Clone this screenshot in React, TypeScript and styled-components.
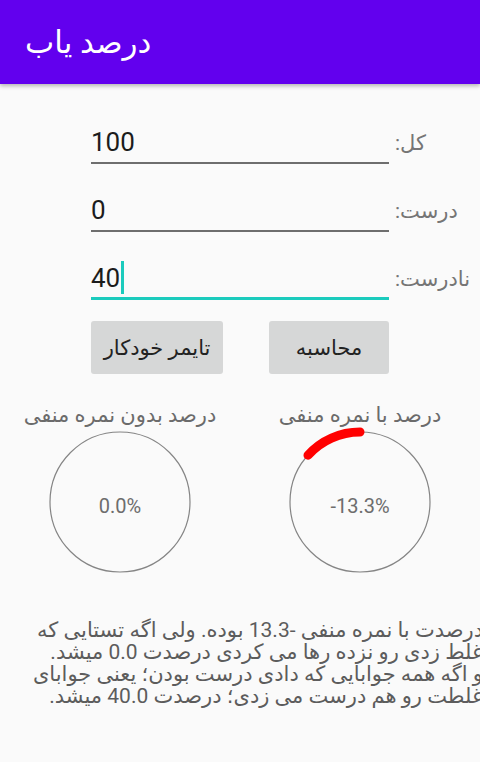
import React from "react";
import styled, { createGlobalStyle } from "styled-components";

const GlobalStyle = createGlobalStyle`
  html, body {
    margin: 0;
    padding: 0;
    background: #fafafa;
    overflow: hidden;
  }
  body {
    font-family: Roboto, "Noto Sans", "DejaVu Sans", sans-serif;
  }
`;

interface FieldInfo {
  label: string;
  value: string;
  focused?: boolean;
}

const fields: FieldInfo[] = [
  { label: "کل:", value: "100" },
  { label: "درست:", value: "0" },
  { label: "نادرست:", value: "40", focused: true },
];

const total = 100;
const correct = 0;
const wrong = 40;
const withNegative = ((correct * 3 - wrong) / (total * 3)) * 100;
const withoutNegative = (correct / total) * 100;
const ifAllCorrect = ((correct + wrong) / total) * 100;

const R = 70;
const C = 72;

const arcPath = (percent: number) => {
  const angle = (Math.abs(percent) / 100) * 2 * Math.PI;
  const dir = percent < 0 ? -1 : 1;
  const x = C + dir * R * Math.sin(angle);
  const y = C - R * Math.cos(angle);
  const large = angle > Math.PI ? 1 : 0;
  const sweep = percent < 0 ? 0 : 1;
  return `M ${C} ${C - R} A ${R} ${R} 0 ${large} ${sweep} ${x.toFixed(2)} ${y.toFixed(2)}`;
};

const Gauge: React.FC<{ title: string; percent: number }> = ({ title, percent }) => (
  <GaugeBox>
    <GaugeTitle>{title}</GaugeTitle>
    <Dial>
      <svg width={C * 2} height={C * 2} viewBox={`0 0 ${C * 2} ${C * 2}`} style={{ overflow: "visible" }}>
        <circle cx={C} cy={C} r={R} fill="none" stroke="#858585" strokeWidth={1.2} />
        {percent !== 0 && (
          <path d={arcPath(percent)} fill="none" stroke="#ff0000" strokeWidth={9} strokeLinecap="round" />
        )}
      </svg>
      <DialValue>{percent.toFixed(1)}%</DialValue>
    </Dial>
  </GaugeBox>
);

export default function App() {
  return (
    <Screen>
      <GlobalStyle />
      <AppBar>
        <Title>درصد یاب</Title>
      </AppBar>
      <Form>
        {fields.map((f) => (
          <Row key={f.label}>
            <Field $focused={f.focused}>
              {f.value}
              {f.focused && <Caret />}
            </Field>
            <Label>{f.label}</Label>
          </Row>
        ))}
      </Form>
      <Buttons>
        <Button>تایمر خودکار</Button>
        <Button $wide={false}>محاسبه</Button>
      </Buttons>
      <Gauges>
        <Gauge title="درصد بدون نمره منفی" percent={withoutNegative} />
        <Gauge title="درصد با نمره منفی" percent={withNegative} />
      </Gauges>
      <Summary>
        درصدت با نمره منفی {withNegative.toFixed(1)} بوده. ولی اگه تستایی که غلط زدی رو نزده رها می کردی درصدت{" "}
        {withoutNegative.toFixed(1)} میشد.
        <br />
        و اگه همه جوابایی که دادی درست بودن؛ یعنی جوابای غلطت رو هم درست می زدی؛ درصدت {ifAllCorrect.toFixed(1)} میشد.
      </Summary>
    </Screen>
  );
}

const Screen = styled.div`
  width: 480px;
  height: 762px;
  background: #fafafa;
  display: flex;
  flex-direction: column;
`;
const AppBar = styled.header`
  height: 84px;
  flex-shrink: 0;
  background: #6200ee;
  display: flex;
  align-items: center;
  padding-left: 25px;
  box-shadow: 0 2px 4px rgba(0, 0, 0, 0.28);
  position: relative;
  z-index: 1;
`;
const Title = styled.h1`
  margin: 0;
  color: #ffffff;
  font-size: 31px;
  font-weight: 400;
`;
const Form = styled.div`
  display: flex;
  flex-direction: column;
  gap: 26px;
  padding: 38px 0 0 91px;
`;
const Row = styled.div`
  display: flex;
  align-items: center;
  gap: 6px;
`;
const Field = styled.div<{ $focused?: boolean }>`
  width: 298px;
  height: ${(p) => (p.$focused ? "39px" : "40px")};
  border-bottom: ${(p) => (p.$focused ? "3px solid #1bcbbd" : "2px solid #6e6e6e")};
  display: flex;
  align-items: center;
  font-size: 26px;
  color: #1c1c1c;
`;
const Caret = styled.span`
  width: 3px;
  height: 33px;
  background: #1bcbbd;
  margin-left: 1px;
`;
const Label = styled.div`
  font-size: 21px;
  color: #757575;
  direction: rtl;
`;
const Buttons = styled.div`
  display: flex;
  gap: 46px;
  padding: 21px 0 0 91px;
`;
const Button = styled.button<{ $wide?: boolean }>`
  width: ${(p) => (p.$wide === false ? "120px" : "132px")};
  height: 53px;
  border: none;
  border-radius: 3px;
  background: #d6d7d7;
  color: #222222;
  font-family: inherit;
  font-size: 21px;
  padding: 0;
`;
const Gauges = styled.div`
  display: grid;
  grid-template-columns: 240px 240px;
  padding-top: 28px;
`;
const GaugeBox = styled.div`
  display: flex;
  flex-direction: column;
  align-items: center;
  gap: 2px;
`;
const GaugeTitle = styled.div`
  font-size: 21px;
  line-height: 26px;
  color: #6b6b6b;
  direction: rtl;
`;
const Dial = styled.div`
  display: grid;
  place-items: center;
  & > * {
    grid-area: 1 / 1;
  }
`;
const DialValue = styled.div`
  font-size: 20px;
  color: #6d6d6d;
  padding-top: 8px;
`;
const Summary = styled.p`
  margin: 45px -3px 0 0;
  direction: rtl;
  text-align: right;
  font-size: 21px;
  line-height: 22px;
  color: #5c5c5c;
`;
